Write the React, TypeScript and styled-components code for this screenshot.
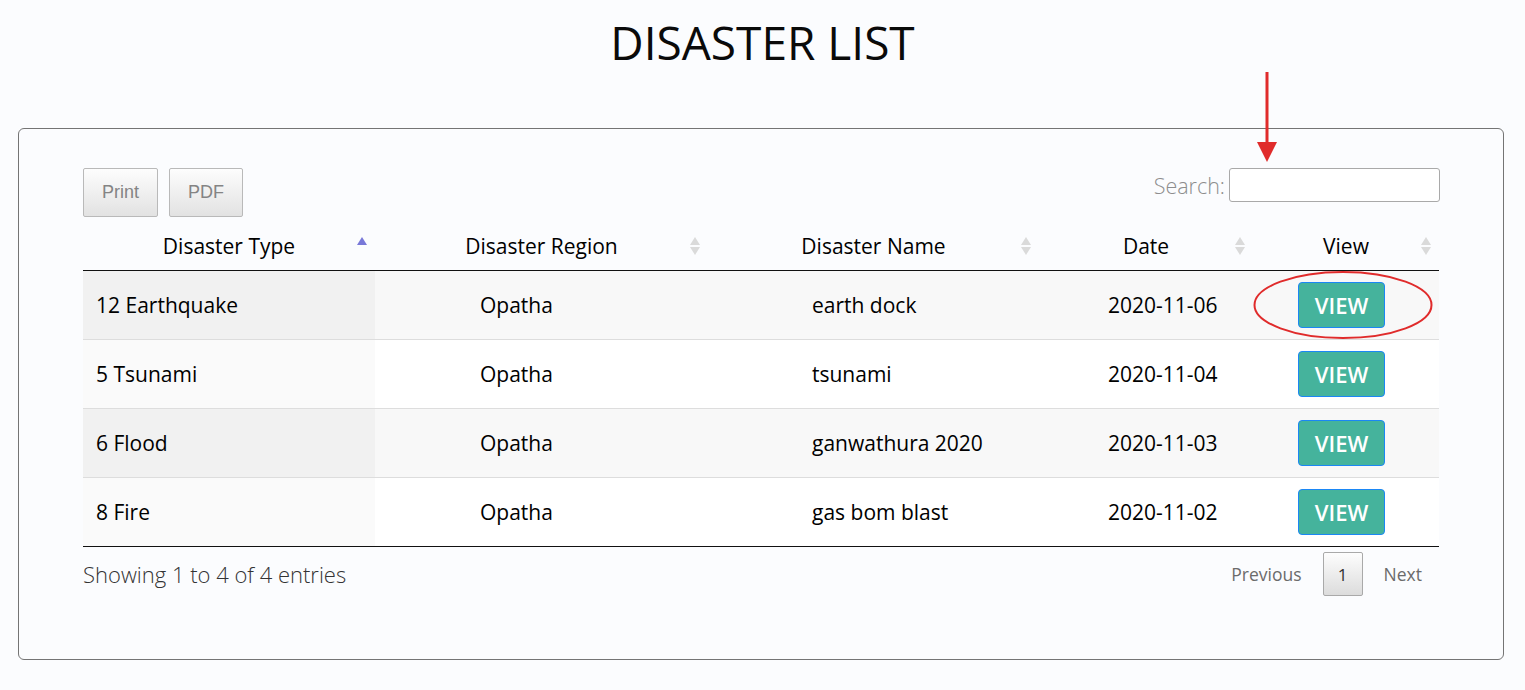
import React from 'react';
import styled, { createGlobalStyle } from 'styled-components';

interface Disaster {
  type: string;
  region: string;
  name: string;
  date: string;
}

const disasters: Array<Disaster> = [
  { type: '12 Earthquake', region: 'Opatha', name: 'earth dock', date: '2020-11-06' },
  { type: '5 Tsunami', region: 'Opatha', name: 'tsunami', date: '2020-11-04' },
  { type: '6 Flood', region: 'Opatha', name: 'ganwathura 2020', date: '2020-11-03' },
  { type: '8 Fire', region: 'Opatha', name: 'gas bom blast', date: '2020-11-02' },
];

interface Column {
  title: string;
  width: number;
  inset: number;
  sorted?: boolean;
}

const columns: Array<Column> = [
  { title: 'Disaster Type', width: 292, inset: 13, sorted: true },
  { title: 'Disaster Region', width: 333, inset: 105 },
  { title: 'Disaster Name', width: 331, inset: 104 },
  { title: 'Date', width: 214, inset: 69 },
  { title: 'View', width: 186, inset: 45 },
];

const SortIcon = ({ sorted }: { sorted?: boolean }): JSX.Element => (
  <SortMark width="12" height="20" viewBox="0 0 12 20">
    {sorted ? (
      <path d="M6 1 L11 9 L1 9 Z" fill="#7878d8" />
    ) : (
      <>
        <path d="M6 1 L11 9 L1 9 Z" fill="#dadada" />
        <path d="M6 19 L11 11 L1 11 Z" fill="#dadada" />
      </>
    )}
  </SortMark>
);

const Annotations = (): JSX.Element => (
  <Overlay width="1525" height="690" viewBox="0 0 1525 690">
    <line x1="1267" y1="72" x2="1267" y2="146" stroke="#e02b2b" strokeWidth="3" />
    <path d="M1257 142 L1277 142 L1267 162 Z" fill="#e02b2b" />
    <ellipse cx="1343" cy="305" rx="88.5" ry="33" fill="none" stroke="#e02b2b" strokeWidth="2" />
  </Overlay>
);

function App(): JSX.Element {
  return (
    <Page>
      <GlobalStyle />
      <Title>DISASTER LIST</Title>
      <Card>
        <Toolbar>
          <ExportButtons>
            <ExportButton>Print</ExportButton>
            <ExportButton>PDF</ExportButton>
          </ExportButtons>
          <SearchLabel>
            Search:
            <SearchInput type="text" />
          </SearchLabel>
        </Toolbar>
        <Table>
          <colgroup>
            {columns.map((c) => (
              <col key={c.title} style={{ width: c.width }} />
            ))}
          </colgroup>
          <thead>
            <tr>
              {columns.map((c) => (
                <HeadCell key={c.title}>
                  {c.title}
                  <SortIcon sorted={c.sorted} />
                </HeadCell>
              ))}
            </tr>
          </thead>
          <tbody>
            {disasters.map((d, i) => {
              const odd = i % 2 === 0;
              const values = [d.type, d.region, d.name, d.date];
              return (
                <Row key={d.name} odd={odd}>
                  {values.map((v, j) => (
                    <Cell key={j} inset={columns[j].inset} sorted={columns[j].sorted} odd={odd}>
                      {v}
                    </Cell>
                  ))}
                  <Cell inset={columns[4].inset} odd={odd}>
                    <ViewButton>VIEW</ViewButton>
                  </Cell>
                </Row>
              );
            })}
          </tbody>
        </Table>
        <Footer>
          <Info>Showing 1 to 4 of 4 entries</Info>
          <Pager>
            <PageLink>Previous</PageLink>
            <PageButton>1</PageButton>
            <PageLink>Next</PageLink>
          </Pager>
        </Footer>
      </Card>
      <Annotations />
    </Page>
  );
}

export default App;

const GlobalStyle = createGlobalStyle`
  html, body {
    margin: 0;
    background: #fbfcfe;
  }
  body {
    font-family: "Open Sans", "DejaVu Sans", sans-serif;
    color: #000;
  }
`;

const Page = styled.div`
  position: relative;
  width: 1525px;
  height: 690px;
  padding-top: 13px;
  box-sizing: border-box;
`;

const Title = styled.h1`
  margin: 0;
  text-align: center;
  font-size: 46px;
  line-height: 58px;
  font-weight: 400;
  color: #0a0a0a;
`;

const Card = styled.div`
  margin: 57px 21px 0 18px;
  height: 532px;
  box-sizing: border-box;
  border: 1.5px solid #747474;
  border-radius: 6px;
  padding: 39px 63px 0 64px;
`;

const Toolbar = styled.div`
  display: flex;
  justify-content: space-between;
  align-items: flex-start;
`;

const ExportButtons = styled.div`
  display: flex;
  gap: 11px;
`;

const ExportButton = styled.button`
  height: 49px;
  padding: 0 18px;
  border: 1px solid #b9b9b9;
  border-radius: 2px;
  background: linear-gradient(#fdfdfd, #e2e2e2);
  color: #848484;
  font-family: "Liberation Sans", Arial, sans-serif;
  font-size: 18px;
`;

const SearchLabel = styled.label`
  display: flex;
  align-items: center;
  gap: 4px;
  color: #8d8d8d;
  font-size: 21.5px;
  font-weight: 300;
`;

const SearchInput = styled.input`
  width: 211px;
  height: 34px;
  box-sizing: border-box;
  border: 1px solid #a9a9a9;
  border-radius: 3px;
  background: #fff;
`;

const Table = styled.table`
  width: 1356px;
  margin-top: 5px;
  border-collapse: collapse;
  table-layout: fixed;
  border-bottom: 1px solid #111;
`;

const HeadCell = styled.th`
  position: relative;
  height: 48px;
  padding: 0;
  text-align: center;
  font-size: 21px;
  font-weight: 400;
  color: #000;
  border-bottom: 1px solid #111;
`;

const SortMark = styled.svg`
  position: absolute;
  right: 7px;
  top: 14px;
`;

const Row = styled.tr<{ odd: boolean }>`
  height: 69px;
  background: ${({ odd }) => (odd ? '#f8f8f8' : '#ffffff')};
  border-top: 1px solid #dddddd;
  &:first-child {
    border-top: none;
  }
`;

const Cell = styled.td<{ inset: number; sorted?: boolean; odd: boolean }>`
  padding: 0 0 0 ${({ inset }) => inset}px;
  font-size: 21px;
  font-weight: 400;
  color: #000;
  white-space: nowrap;
  background: ${({ sorted, odd }) => (sorted ? (odd ? '#f1f1f1' : '#fafafa') : 'transparent')};
`;

const ViewButton = styled.button`
  width: 87px;
  height: 46px;
  padding: 0;
  border: 1px solid #1b87f5;
  border-radius: 4px;
  background: #45b39c;
  color: #fff;
  font-family: inherit;
  font-size: 22px;
  font-weight: 600;
`;

const Footer = styled.div`
  display: flex;
  justify-content: space-between;
  align-items: center;
  padding: 5px 18px 0 0;
`;

const Info = styled.div`
  font-size: 22px;
  font-weight: 300;
  color: #333;
`;

const Pager = styled.div`
  display: flex;
  align-items: center;
  gap: 21px;
`;

const PageLink = styled.span`
  font-size: 17.5px;
  color: #6b6b6b;
`;

const PageButton = styled.button`
  width: 40px;
  height: 44px;
  border: 1px solid #a9a9a9;
  border-radius: 2px;
  background: linear-gradient(#fdfdfd, #dcdcdc);
  color: #333;
  font-family: inherit;
  font-size: 17px;
`;

const Overlay = styled.svg`
  position: absolute;
  left: 0;
  top: 0;
  pointer-events: none;
`;
